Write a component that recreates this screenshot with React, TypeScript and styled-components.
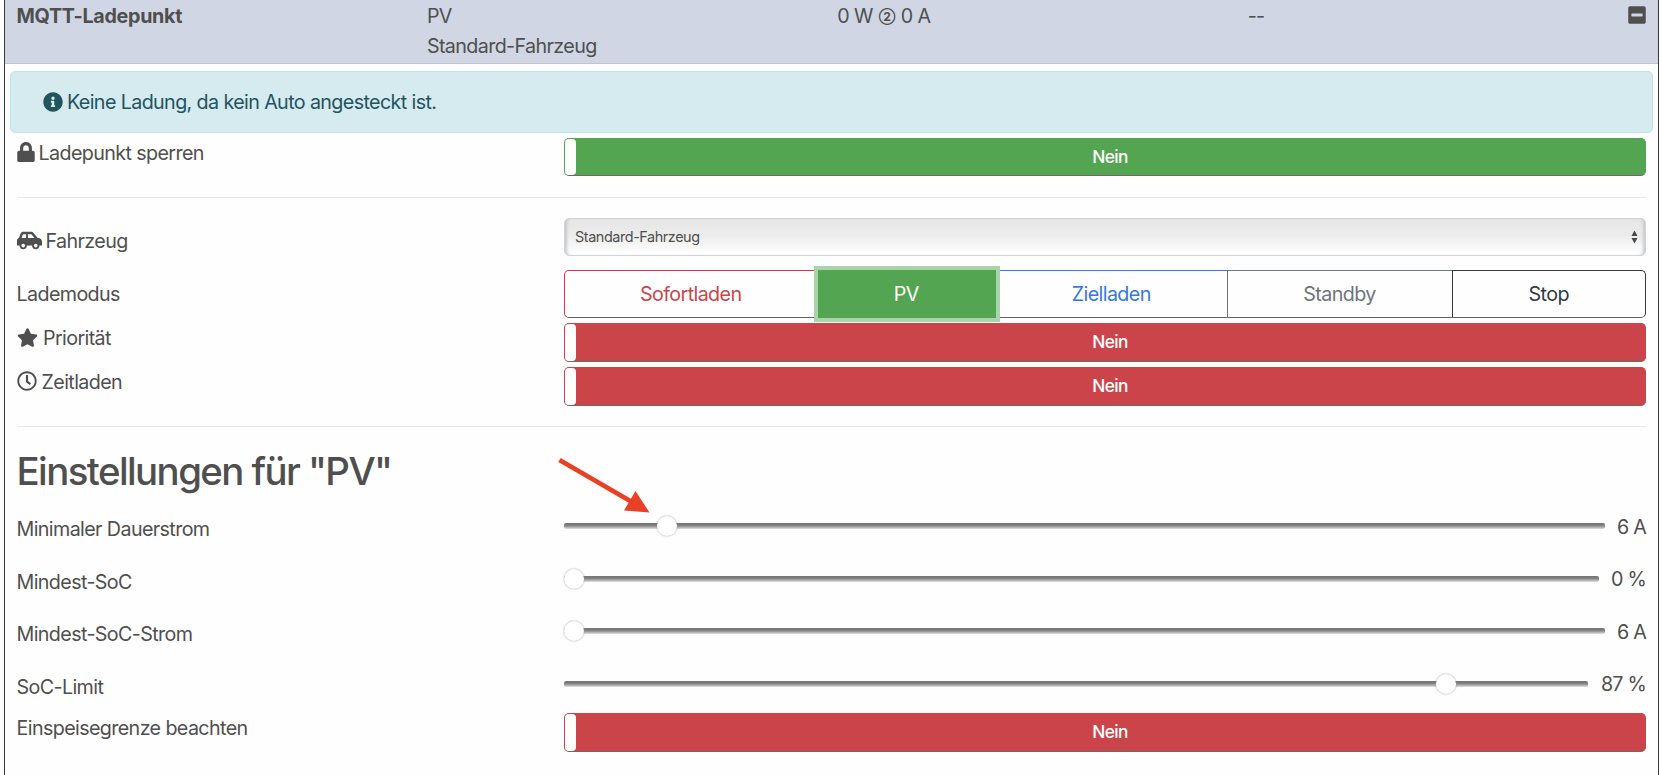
import { useState } from 'react';
import styled, { createGlobalStyle } from 'styled-components';
import { FaCarSide, FaInfoCircle, FaLock, FaMinusSquare, FaRegClock, FaStar } from 'react-icons/fa';

const GlobalStyle = createGlobalStyle`
  * {
    box-sizing: border-box;
  }

  body {
    margin: 0;
    background: #fefefe;
    color: #4f4f4f;
    font-family: Inter, "Liberation Sans", sans-serif;
    font-size: 19.7px;
    line-height: 30px;
    letter-spacing: -0.031em;
    overflow: hidden;
  }
`;

// Styled components
const Card = styled.main`
  height: 775px;
  margin: 0 3px 0 4px;
  border: solid #343a40;
  border-width: 0 1px;
  overflow: hidden;
`;

const CardHeader = styled.header`
  display: grid;
  grid-template-columns: repeat(4, 410.4px);
  height: 64px;
  padding: 1px 0 0 11.5px;
  background: #d1d6e4;
  border-bottom: 1px solid #c0c4d0;
`;

const HeaderCell = styled.div`
  white-space: nowrap;
`;

const Name = styled.strong`
  font-weight: 700;
  letter-spacing: -0.015em;
`;

const Phases = styled.span`
  margin: 0 1px;
  font-size: 12px;
  font-weight: 700;
  line-height: 1;
  vertical-align: 2px;
`;

const CollapseCell = styled(HeaderCell)`
  display: flex;
  justify-content: space-between;
  padding: 4px 11.5px 0 0;
`;

const Dashes = styled.span`
  margin-top: -4px;
`;

const Alert = styled.div`
  display: flex;
  align-items: center;
  gap: 4.5px;
  height: 62px;
  margin: 7px 5px 5px;
  padding: 0 31.5px;
  border: 1px solid #bee5eb;
  border-radius: 5px;
  background: #d5ebef;
  color: #225460;
`;

const Section = styled.section`
  padding: 0 12px 0 11.5px;
`;

const Row = styled.div<{ $height: number; $after?: number }>`
  display: grid;
  grid-template-columns: 547.5px 1fr;
  height: ${(p) => p.$height}px;
  margin-bottom: ${(p) => p.$after ?? 0}px;
`;

const Label = styled.label<{ $drop?: number; $gap?: number }>`
  display: flex;
  align-items: center;
  gap: ${(p) => p.$gap ?? 5}px;
  height: 30px;
  margin-top: ${(p) => p.$drop ?? 0}px;
  white-space: nowrap;

  svg {
    margin-top: -2px;
  }
`;

// the lock glyph is narrower than its box
const LockLabel = styled(Label)`
  gap: 3px;

  svg {
    margin-left: -1px;
  }
`;

const Divider = styled.hr`
  height: 1px;
  margin: 20px 0;
  border: 0;
  background: #e9e9e9;
`;

const Toggle = styled.button<{ $color: string }>`
  position: relative;
  display: flex;
  align-items: center;
  justify-content: center;
  width: 100%;
  padding: 0 0 1px 10px;
  border: 1px solid ${(p) => p.$color};
  border-bottom-color: #6d6a5c;
  border-radius: 5px;
  background: ${(p) => p.$color};
  color: #fff;
  font: 500 17.3px/26px Inter, "Liberation Sans", sans-serif;
  letter-spacing: -0.035em;

  &::before {
    content: '';
    position: absolute;
    inset: 0 auto 0 0;
    width: 11px;
    border-radius: 4px;
    background: #fff;
  }
`;

const Select = styled.div`
  display: flex;
  align-items: center;
  justify-content: space-between;
  padding: 0 7px 0 10px;
  border: 1px solid #ced4da;
  border-radius: 5px;
  background: linear-gradient(#e6e6e6, #ececec 45%, #fefefe 95%);
  box-shadow: inset 4px 0 3px -2px #c9c9c9, inset -4px 0 3px -2px #c9c9c9;
  font-size: 14.4px;
  letter-spacing: -0.029em;
`;

const ModeGroup = styled.div`
  display: grid;
  grid-template-columns: 253.5px 178.5px 231.5px 225px 1fr;
`;

const ModeButton = styled.button<{ $color: string; $border: string; $active?: boolean }>`
  padding: 0;
  border: 1px solid ${(p) => p.$border};
  border-bottom-color: ${(p) => (p.$active ? p.$border : '#5f6165')};
  border-left-width: 0;
  background: ${(p) => (p.$active ? p.$color : 'transparent')};
  color: ${(p) => (p.$active ? '#fff' : p.$color)};
  font: inherit;
  letter-spacing: inherit;
  box-shadow: ${(p) => (p.$active ? '0 0 0 4px #a9d4ab' : 'none')};
  z-index: ${(p) => (p.$active ? 1 : 0)};

  &:first-child {
    border-left-width: 1px;
    border-radius: 5px 0 0 5px;
  }

  &:nth-child(3) {
    border-right-color: #6c757d;
  }

  &:last-child {
    margin-left: -1px;
    border-left-width: 1px;
    border-radius: 0 5px 5px 0;
  }
`;

const Title = styled.h2`
  height: 48px;
  margin: 0 0 19px;
  font-size: 38.4px;
  font-weight: 500;
  line-height: 48px;
  letter-spacing: -0.041em;
  white-space: nowrap;
`;

const SliderBox = styled.div`
  display: flex;
  align-items: center;
  gap: 12.5px;
  height: 30px;
  margin-top: -3px;
`;

const Track = styled.div`
  position: relative;
  flex: 1;
  height: 6px;
  border-radius: 2px;
  background: linear-gradient(#757575 0%, #7b7b7b 35%, #a5a5a5 65%, #e2e2e2 100%);
`;

const Thumb = styled.div`
  position: absolute;
  top: -7px;
  width: 20px;
  height: 20px;
  border-radius: 50%;
  background: #fff;
  box-shadow: 0 0 2px #999;
`;

const Value = styled.span`
  padding-top: 1px;
  letter-spacing: -0.04em;
  white-space: nowrap;
`;

const Arrow = styled.svg`
  position: absolute;
  left: -8px;
  top: -66px;
  pointer-events: none;
`;

const LastRow = styled(Row)`
  margin-top: -11px;
`;

const RED = '#cb444a';
const GREEN = '#53a551';

const modes = [
  { label: 'Sofortladen', color: RED, border: '#dc3545' },
  { label: 'PV', color: GREEN, border: GREEN },
  { label: 'Zielladen', color: '#3478e5', border: '#2f7cf6' },
  { label: 'Standby', color: '#6c757d', border: '#6c757d' },
  { label: 'Stop', color: '#343a40', border: '#343a40' },
];

const sliders = [
  { label: 'Minimaler Dauerstrom', value: '6 A', position: 0.0912, pointer: true },
  { label: 'Mindest-SoC', value: '0 %', position: 0 },
  { label: 'Mindest-SoC-Strom', value: '6 A', position: 0 },
  { label: 'SoC-Limit', value: '87 %', position: 0.8677 },
];

const PointerArrow = () => (
  <Arrow width="96" height="60" viewBox="556 457 96 60">
    <path d="M559.5 460 L632 502" stroke="#ea4025" strokeWidth="4.8" />
    <path d="M649.5 512.5 L635.5 491 L624 510.5 Z" fill="#ea4025" />
  </Arrow>
);

export default function App() {
  const [mode, setMode] = useState('PV');

  return (
    <>
      <GlobalStyle />
      <Card>
        <CardHeader>
          <HeaderCell>
            <Name>MQTT-Ladepunkt</Name>
          </HeaderCell>
          <HeaderCell>
            PV
            <br />
            Standard-Fahrzeug
          </HeaderCell>
          <HeaderCell>
            0 W <Phases>②</Phases> 0 A
          </HeaderCell>
          <CollapseCell>
            <Dashes>--</Dashes>
            <FaMinusSquare size={20} />
          </CollapseCell>
        </CardHeader>
        <Alert>
          <FaInfoCircle size={20} />
          Keine Ladung, da kein Auto angesteckt ist.
        </Alert>
        <Section>
          <Row $height={38} $after={21}>
            <LockLabel>
              <FaLock size={20} />
              Ladepunkt sperren
            </LockLabel>
            <Toggle $color={GREEN}>Nein</Toggle>
          </Row>
          <Divider />
          <Row $height={38} $after={14}>
            <Label $drop={8} $gap={4}>
              <FaCarSide size={25} />
              Fahrzeug
            </Label>
            <Select>
              Standard-Fahrzeug
              <svg width="7" height="14" viewBox="0 0 7 14" fill="#4a4a4a">
                <path d="M3.5 0.5 L6.5 6 H0.5 Z M3.5 13.5 L6.5 8 H0.5 Z" />
              </svg>
            </Select>
          </Row>
          <Row $height={48} $after={5}>
            <Label $drop={9}>Lademodus</Label>
            <ModeGroup>
              {modes.map((m) => (
                <ModeButton
                  key={m.label}
                  $color={m.color}
                  $border={m.border}
                  $active={m.label === mode}
                  onClick={() => setMode(m.label)}
                >
                  {m.label}
                </ModeButton>
              ))}
            </ModeGroup>
          </Row>
          <Row $height={39} $after={5}>
            <Label $gap={5.5}>
              <FaStar size={21} />
              Priorität
            </Label>
            <Toggle $color={RED}>Nein</Toggle>
          </Row>
          <Row $height={39}>
            <Label>
              <FaRegClock size={20} />
              Zeitladen
            </Label>
            <Toggle $color={RED}>Nein</Toggle>
          </Row>
          <Divider />
          <Title>Einstellungen für "PV"</Title>
          {sliders.map((s) => (
            <Row key={s.label} $height={52.6}>
              <Label>{s.label}</Label>
              <SliderBox>
                <Track>
                  <Thumb style={{ left: `calc((100% - 20px) * ${s.position})` }} />
                  {s.pointer && <PointerArrow />}
                </Track>
                <Value>{s.value}</Value>
              </SliderBox>
            </Row>
          ))}
          <LastRow $height={39}>
            <Label>Einspeisegrenze beachten</Label>
            <Toggle $color={RED}>Nein</Toggle>
          </LastRow>
        </Section>
      </Card>
    </>
  );
}
